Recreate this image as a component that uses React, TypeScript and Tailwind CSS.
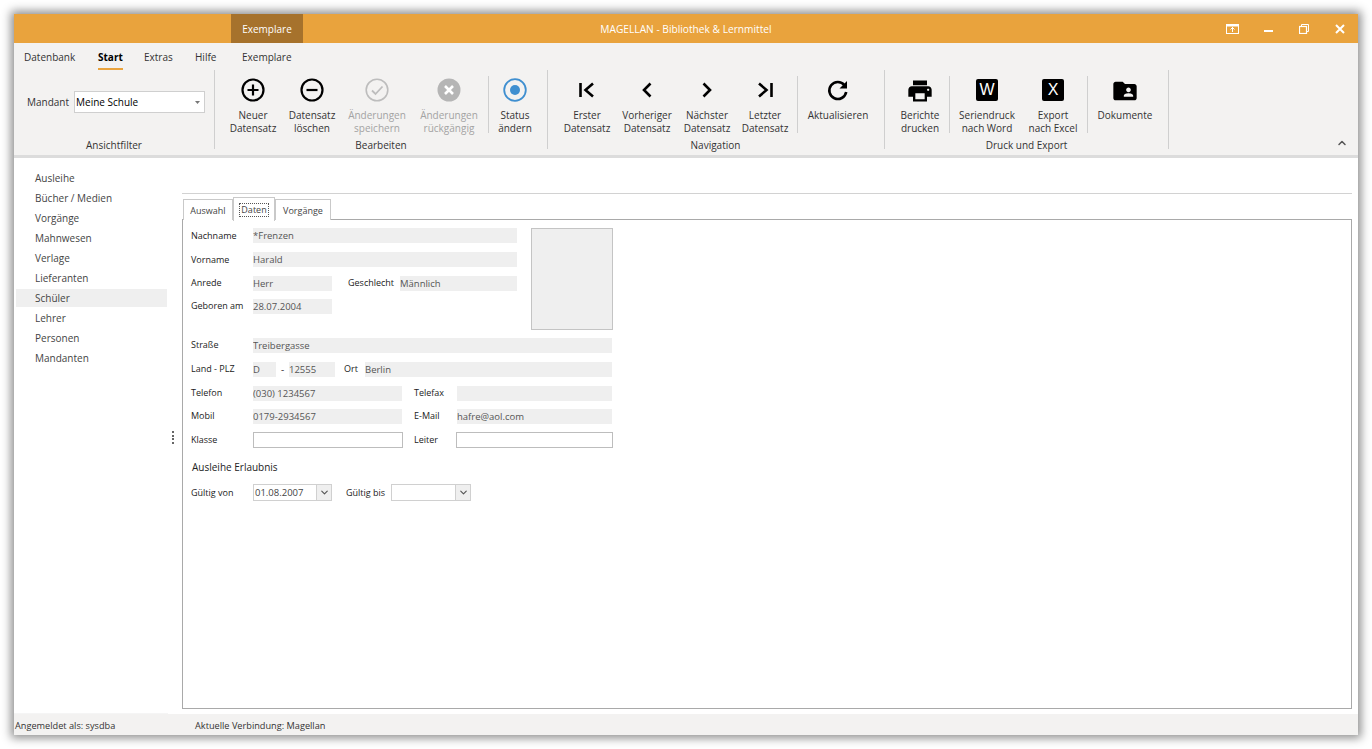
import { ReactNode } from "react";
import { ChevronDown, ChevronUp } from "lucide-react";

const sidebarItems = ["Ausleihe", "Bücher / Medien", "Vorgänge", "Mahnwesen", "Verlage", "Lieferanten", "Schüler", "Lehrer", "Personen", "Mandanten"];

function Sep({ tall }: { tall?: boolean }) {
    return <div className={tall ? "w-px h-[79px] bg-[#cfcfcf] shrink-0" : "w-px h-[57px] mt-[6px] bg-[#cfcfcf] shrink-0"} />;
}

function RibbonButton({ w, icon, lines, off }: { w: string; icon: ReactNode; lines: string[]; off?: boolean }) {
    return (
        <div className={`${w} shrink-0 flex flex-col items-center`}>
            <div className="h-[39px] pt-[7px] flex items-start justify-center">{icon}</div>
            <div className={`text-center leading-[13px] ${off ? "text-[#a3a3a3]" : "text-[#333]"}`}>
                {lines.map((l) => <div key={l} className="whitespace-nowrap">{l}</div>)}
            </div>
        </div>
    );
}

function Icon({ children, fill }: { children: ReactNode; fill?: string }) {
    return <svg width="26" height="26" viewBox="0 0 26 26" fill={fill ?? "none"}>{children}</svg>;
}

function Mat({ d }: { d: string }) {
    return <svg width="28" height="28" viewBox="0 0 24 24" fill="#000"><path d={d} /></svg>;
}

function Square({ letter }: { letter: string }) {
    return <div className="w-[22px] h-[22px] mt-[2px] rounded-[2px] bg-black text-white text-[16px] leading-[22px] text-center font-['Liberation_Sans',sans-serif]">{letter}</div>;
}

function Field({ w, children }: { w: string; children?: ReactNode }) {
    return <div className={`${w} h-[15px] bg-[#efefef] text-[9.5px] text-[#555] leading-[16px] shrink-0 whitespace-nowrap overflow-hidden`}>{children}</div>;
}

function Lbl({ w, children }: { w: string; children: ReactNode }) {
    return <div className={`${w} text-[9px] text-[#222] leading-[14px] shrink-0 whitespace-nowrap`}>{children}</div>;
}

function Combo({ w, value }: { w: string; value?: string }) {
    return (
        <div className={`${w} h-[17px] border border-[#d0d0d0] bg-white flex shrink-0`}>
            <div className="flex-1 pl-px text-[9.5px] leading-[15px] text-[#444]">{value}</div>
            <div className="w-[15px] bg-[#efefef] border-l border-[#d0d0d0] flex items-center justify-center">
                <ChevronDown size={11} strokeWidth={2.5} color="#555" />
            </div>
        </div>
    );
}

export default function App() {
    return (
        <div className="h-[749px] w-[1372px] bg-white p-[14px] overflow-hidden text-[10px] font-['Open_Sans',sans-serif]">
            <div className="h-full flex flex-col bg-white shadow-[0_0_9px_3px_rgba(0,0,0,0.45)]">
                {/* title bar */}
                <div className="h-[29px] bg-[#e9a33d] flex text-white shrink-0">
                    <div className="w-[217px] shrink-0" />
                    <div className="w-[72px] h-full bg-[#a6722c] flex items-center justify-center pt-[2px]">Exemplare</div>
                    <div className="w-[766px] text-center leading-[31px] text-[10.2px]">MAGELLAN - Bibliothek &amp; Lernmittel</div>
                    <div className="flex-1 flex justify-end">
                        <div className="w-[36px] flex items-center justify-center">
                            <svg width="13" height="10" viewBox="0 0 13 10"><rect x="0.5" y="0.5" width="12" height="9" fill="none" stroke="#fff" /><rect x="0" y="0" width="13" height="2.5" fill="#fff" /><path d="M6.5 3v5M4.5 5.5l2-2 2 2" stroke="#fff" fill="none" /></svg>
                        </div>
                        <div className="w-[36px] flex items-center justify-center pt-[5px]"><div className="w-[9px] h-[2px] bg-white" /></div>
                        <div className="w-[36px] flex items-center justify-center">
                            <svg width="10" height="10" viewBox="0 0 10 10" fill="none" stroke="#fff"><rect x="0.5" y="2.5" width="7" height="7" strokeWidth="1.2" /><path d="M2.5 2.5v-2h7v7h-2" /></svg>
                        </div>
                        <div className="w-[36px] flex items-center justify-center">
                            <svg width="10" height="10" viewBox="0 0 10 10" stroke="#fff" strokeWidth="2"><path d="M1 1l8 8M9 1l-8 8" /></svg>
                        </div>
                    </div>
                </div>

                {/* ribbon */}
                <div className="h-[115px] bg-[#f3f2f1] border-b-[3px] border-[#dcdcdc] shrink-0">
                    <div className="h-[27px] flex pl-[10px] text-[#333]">
                        <div className="w-[74px] pt-[7px]">Datenbank</div>
                        <div className="w-[46px] pt-[7px]">
                            <div className="w-fit font-bold text-black">Start<div className="h-[2px] mt-[3px] bg-[#e9a33d]" /></div>
                        </div>
                        <div className="w-[51px] pt-[7px]">Extras</div>
                        <div className="w-[47px] pt-[7px]">Hilfe</div>
                        <div className="pt-[7px]">Exemplare</div>
                    </div>
                    <div className="flex h-[85px]">
                        {/* Ansichtfilter */}
                        <div className="w-[200px] shrink-0 flex flex-col">
                            <div className="flex gap-[5px] pl-[13px] pt-[22px] h-[69px] items-start text-[#333]">
                                <div className="leading-[20px]">Mandant</div>
                                <div className="w-[131px] h-[22px] border border-[#cfcfcf] bg-white flex items-center justify-between pl-[1px] pr-[4px] -mt-[1px] text-black">
                                    <span>Meine Schule</span>
                                    <svg width="5" height="3" viewBox="0 0 5 3" fill="#777"><path d="M0 0h5L2.500 3z" /></svg>
                                </div>
                            </div>
                            <div className="text-center text-[#333] leading-[13px]">Ansichtfilter</div>
                        </div>
                        <Sep tall />
                        {/* Bearbeiten */}
                        <div className="w-[332px] shrink-0 flex flex-col">
                            <div className="flex h-[69px] pl-[7px]">
                                <RibbonButton w="w-[62px]" lines={["Neuer", "Datensatz"]} icon={<Icon><circle cx="13" cy="13" r="10.500" stroke="#000" strokeWidth="2.200" /><path d="M13 7.500v11M7.500 13h11" stroke="#000" strokeWidth="2.200" /></Icon>} />
                                <RibbonButton w="w-[56px]" lines={["Datensatz", "löschen"]} icon={<Icon><circle cx="13" cy="13" r="10.500" stroke="#000" strokeWidth="2.200" /><path d="M7.500 13h11" stroke="#000" strokeWidth="2.200" /></Icon>} />
                                <RibbonButton w="w-[74px]" off lines={["Änderungen", "speichern"]} icon={<Icon><circle cx="13" cy="13" r="10.800" stroke="#bdbdbd" strokeWidth="1.600" /><path d="M8 13.500l3.500 3.500 7-7.500" stroke="#bdbdbd" strokeWidth="1.800" /></Icon>} />
                                <RibbonButton w="w-[70px]" off lines={["Änderungen", "rückgängig"]} icon={<Icon><circle cx="13" cy="13" r="11.500" fill="#b5b5b5" /><path d="M9 9l8 8M17 9l-8 8" stroke="#fff" strokeWidth="2.600" /></Icon>} />
                                <div className="w-[4px]" />
                                <Sep />
                                <RibbonButton w="w-[52px]" lines={["Status", "ändern"]} icon={<Icon><circle cx="13" cy="13" r="10.800" stroke="#3f8fd0" strokeWidth="1.800" /><circle cx="13" cy="13" r="5" fill="#3f8fd0" /></Icon>} />
                            </div>
                            <div className="text-center text-[#333] leading-[13px]">Bearbeiten</div>
                        </div>
                        <Sep tall />
                        {/* Navigation */}
                        <div className="w-[336px] shrink-0 flex flex-col">
                            <div className="flex h-[69px] pl-[9px]">
                                <RibbonButton w="w-[60px]" lines={["Erster", "Datensatz"]} icon={<Icon><path d="M6.500 6v14" stroke="#000" strokeWidth="2.600" /><path d="M19 6.500L11.500 13l7.500 6.500" stroke="#000" strokeWidth="2.600" /></Icon>} />
                                <RibbonButton w="w-[60px]" lines={["Vorheriger", "Datensatz"]} icon={<Icon><path d="M16.500 6.500L10 13l6.500 6.500" stroke="#000" strokeWidth="2.600" /></Icon>} />
                                <RibbonButton w="w-[60px]" lines={["Nächster", "Datensatz"]} icon={<Icon><path d="M9.500 6.500L16 13l-6.500 6.500" stroke="#000" strokeWidth="2.600" /></Icon>} />
                                <RibbonButton w="w-[56px]" lines={["Letzter", "Datensatz"]} icon={<Icon><path d="M19.500 6v14" stroke="#000" strokeWidth="2.600" /><path d="M7 6.500L14.500 13 7 19.500" stroke="#000" strokeWidth="2.600" /></Icon>} />
                                <div className="w-[4px]" />
                                <Sep />
                                <RibbonButton w="w-[80px]" lines={["Aktualisieren"]} icon={<Icon><path d="M19.500 8.200A8.500 8.500 0 1 0 21.200 15" stroke="#000" strokeWidth="2.600" /><path d="M22 4v7.500h-7.500z" fill="#000" /></Icon>} />
                            </div>
                            <div className="text-center text-[#333] leading-[13px] pr-[1px]">Navigation</div>
                        </div>
                        <Sep tall />
                        {/* Druck und Export */}
                        <div className="w-[283px] shrink-0 flex flex-col">
                            <div className="flex h-[69px] pl-[8px]">
                                <RibbonButton w="w-[54px]" lines={["Berichte", "drucken"]} icon={<Mat d="M19 8H5c-1.660 0-3 1.340-3 3v6h4v4h12v-4h4v-6c0-1.660-1.340-3-3-3zm-3 11H8v-5h8v5zm3-7c-.550 0-1-.450-1-1s.450-1 1-1 1 .450 1 1-.450 1-1 1zm-1-9H6v4h12V3z" />} />
                                <div className="w-[2px]" />
                                <Sep />
                                <RibbonButton w="w-[74px]" lines={["Seriendruck", "nach Word"]} icon={<Square letter="W" />} />
                                <RibbonButton w="w-[58px]" lines={["Export", "nach Excel"]} icon={<Square letter="X" />} />
                                <div className="w-[5px]" />
                                <Sep />
                                <RibbonButton w="w-[74px]" lines={["Dokumente"]} icon={<Mat d="M20 6h-8l-2-2H4c-1.100 0-2 .900-2 2v12c0 1.100.900 2 2 2h16c1.100 0 2-.900 2-2V8c0-1.100-.900-2-2-2zm-5 3c1.100 0 2 .900 2 2s-.900 2-2 2-2-.900-2-2 .900-2 2-2zm4 8h-8v-1c0-1.330 2.670-2 4-2s4 .670 4 2v1z" />} />
                            </div>
                            <div className="text-center text-[#333] leading-[13px]">Druck und Export</div>
                        </div>
                        <Sep tall />
                        <div className="flex-1 flex justify-end items-end pr-[10px] pb-[6px]">
                            <ChevronUp size={12} strokeWidth={3} color="#555" />
                        </div>
                    </div>
                </div>

                {/* body */}
                <div className="flex-1 flex min-h-0">
                    <div className="w-[154px] shrink-0 pl-[2px] pr-px pt-[10px] flex flex-col text-[#444] border-b border-[#f5f5f5]">
                        {sidebarItems.map((item) => (
                            <div key={item} className={`h-[18px] my-px leading-[18px] pl-[19px] ${item === "Schüler" ? "bg-[#efefef]" : ""}`}>{item}</div>
                        ))}
                    </div>
                    <div className="w-[14px] shrink-0 flex flex-col items-center gap-[1.5px] pt-[273px] pr-[4px]">
                        <div className="w-[2px] h-[2px] bg-[#666]" />
                        <div className="w-[2px] h-[2px] bg-[#666]" />
                        <div className="w-[2px] h-[2px] bg-[#666]" />
                        <div className="w-[2px] h-[2px] bg-[#666]" />
                    </div>
                    <div className="flex-1 flex flex-col min-w-0 pr-[6px] pt-[35px] pb-[5px]">
                        <div className="h-px bg-[#d2d2d2] shrink-0" />
                        <div className="flex items-end h-[26px] shrink-0 pl-px text-[9px] text-[#444] relative z-10 -mb-px">
                            <div className="w-[50px] h-[21px] border border-b-0 border-[#c9c9c9] bg-white flex items-center justify-center pt-[2px]">Auswahl</div>
                            <div className="w-[42px] h-[24px] border border-b-0 border-[#c9c9c9] bg-white flex items-center justify-center -mb-px">
                                <span className="border border-dotted border-[#555] px-px leading-[12px]">Daten</span>
                            </div>
                            <div className="w-[56px] h-[21px] border border-b-0 border-[#c9c9c9] bg-white flex items-center justify-center pt-[2px]">Vorgänge</div>
                        </div>
                        <div className="flex-1 border border-[#a9a9a9] pl-[8px] pt-[8px]">
                            <div className="flex">
                                <div className="w-[340px] shrink-0 flex flex-col gap-[9px]">
                                    <div className="flex"><Lbl w="w-[62px] pt-px">Nachname</Lbl><Field w="w-[264px]">*Frenzen</Field></div>
                                    <div className="flex"><Lbl w="w-[62px] pt-px">Vorname</Lbl><Field w="w-[264px]">Harald</Field></div>
                                    <div className="flex">
                                        <Lbl w="w-[62px]">Anrede</Lbl><Field w="w-[79px]">Herr</Field>
                                        <div className="w-[16px]" />
                                        <Lbl w="w-[52px]">Geschlecht</Lbl><Field w="w-[117px]">Männlich</Field>
                                    </div>
                                    <div className="flex -mt-px"><Lbl w="w-[62px]">Geboren am</Lbl><Field w="w-[79px]">28.07.2004</Field></div>
                                </div>
                                <div className="w-[82px] h-[102px] bg-[#efefef] border border-[#c4c4c4]" />
                            </div>
                            <div className="w-[422px] flex flex-col gap-[9px] mt-[8px]">
                                <div className="flex"><Lbl w="w-[62px]">Straße</Lbl><Field w="w-[359px]">Treibergasse</Field></div>
                                <div className="flex">
                                    <Lbl w="w-[62px]">Land - PLZ</Lbl><Field w="w-[23px]">D</Field>
                                    <div className="w-[13px] text-center text-[#444]">-</div>
                                    <Field w="w-[46px]">12555</Field>
                                    <div className="w-[9px]" />
                                    <Lbl w="w-[21px]">Ort</Lbl><Field w="w-[247px]">Berlin</Field>
                                </div>
                                <div className="flex">
                                    <Lbl w="w-[62px]">Telefon</Lbl><Field w="w-[149px]">(030) 1234567</Field>
                                    <div className="w-[12px]" />
                                    <Lbl w="w-[43px]">Telefax</Lbl><Field w="w-[155px]" />
                                </div>
                                <div className="flex -mt-px">
                                    <Lbl w="w-[62px]">Mobil</Lbl><Field w="w-[149px]">0179-2934567</Field>
                                    <div className="w-[12px]" />
                                    <Lbl w="w-[43px]">E-Mail</Lbl><Field w="w-[155px]">hafre@aol.com</Field>
                                </div>
                                <div className="flex items-center -mt-px">
                                    <Lbl w="w-[62px]">Klasse</Lbl>
                                    <div className="w-[150px] h-[16px] border border-[#bdbdbd] bg-white" />
                                    <div className="w-[11px]" />
                                    <Lbl w="w-[42px]">Leiter</Lbl>
                                    <div className="w-[157px] h-[16px] border border-[#bdbdbd] bg-white" />
                                </div>
                            </div>
                            <div className="mt-[12px] leading-[14px] text-[#222] pl-px">Ausleihe Erlaubnis</div>
                            <div className="flex items-center mt-[10px]">
                                <Lbl w="w-[62px]">Gültig von</Lbl>
                                <Combo w="w-[79px]" value="01.08.2007" />
                                <div className="w-[14px]" />
                                <Lbl w="w-[45px]">Gültig bis</Lbl>
                                <Combo w="w-[80px]" />
                            </div>
                        </div>
                    </div>
                </div>

                {/* status bar */}
                <div className="h-[21px] bg-[#f3f2f1] flex items-center text-[9.2px] text-[#333] shrink-0 pl-[1px] pt-[2px]">
                    <div className="w-[180px]">Angemeldet als: sysdba</div>
                    <div>Aktuelle Verbindung: Magellan</div>
                </div>
            </div>
        </div>
    );
}
